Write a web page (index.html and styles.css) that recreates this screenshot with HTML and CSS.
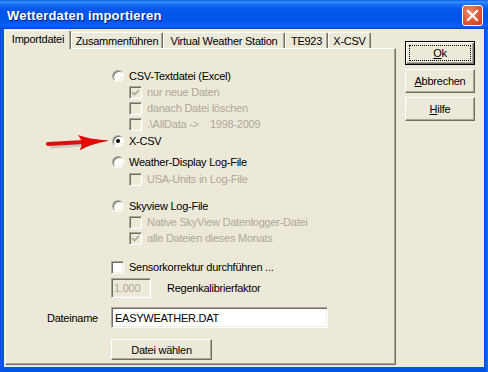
FILE: index.html
```html
<!DOCTYPE html>
<html>
<head>
<meta charset="utf-8">
<link rel="stylesheet" href="styles.css">
</head>
<body>
<div class="window">
  <div class="titlebar">
    <span class="title">Wetterdaten importieren</span>
    <span class="close"><svg width="13" height="13" viewBox="0 0 13 13"><path d="M2 2 L11 11 M11 2 L2 11" stroke="#fff" stroke-width="2.2" stroke-linecap="square"/></svg></span>
  </div>
  <div class="client">
    <div class="tabarea">
      <div class="tabs">
        <div class="tab active w1">Importdatei</div>
        <div class="tab w2">Zusammenführen</div>
        <div class="tab w3">Virtual Weather Station</div>
        <div class="tab w4">TE923</div>
        <div class="tab w5">X-CSV</div>
      </div>
      <div class="panel">
        <div class="row opt"><span class="radio"></span><span class="lbl">CSV-Textdatei (Excel)</span></div>
        <div class="row sub dis"><span class="check off on"><svg width="9" height="9" viewBox="0 0 9 9"><path d="M1 4 L3.5 6.5 L8 2" fill="none" stroke="#ACA899" stroke-width="1.7"/></svg></span><span class="lbl">nur neue Daten</span></div>
        <div class="row sub dis"><span class="check off"></span><span class="lbl">danach Datei löschen</span></div>
        <div class="row sub dis"><span class="check off"></span><span class="lbl">.\AllData -&gt;&nbsp;&nbsp;&nbsp; 1998-2009</span></div>
        <div class="row opt r-xcsv"><span class="radio sel"></span><span class="lbl">X-CSV</span></div>
        <div class="row opt r-wd"><span class="radio"></span><span class="lbl">Weather-Display Log-File</span></div>
        <div class="row sub dis r-usa"><span class="check off"></span><span class="lbl">USA-Units in Log-File</span></div>
        <div class="row opt r-sky"><span class="radio"></span><span class="lbl">Skyview Log-File</span></div>
        <div class="row sub dis"><span class="check off"></span><span class="lbl">Native SkyView Datenlogger-Datei</span></div>
        <div class="row sub dis"><span class="check off"><svg width="9" height="9" viewBox="0 0 9 9"><path d="M1 4 L3.5 6.5 L8 2" fill="none" stroke="#ACA899" stroke-width="1.7"/></svg></span><span class="lbl">alle Dateien dieses Monats</span></div>
        <div class="row sensor"><span class="check"></span><span class="lbl">Sensorkorrektur durchführen ...</span></div>
        <div class="rain"><span class="field disabled small">1.000</span><span class="rainlbl">Regenkalibrierfaktor</span></div>
        <div class="fname"><span class="flabel">Dateiname</span><span class="field wide">EASYWEATHER.DAT</span></div>
        <div class="choose"><span class="btn wbtn">Datei wählen</span></div>
      </div>
    </div>
    <div class="buttons">
      <span class="btn def"><span class="focus"><u>O</u>k</span></span>
      <span class="btn"><u>A</u>bbrechen</span>
      <span class="btn"><u>H</u>ilfe</span>
    </div>
  </div>
  <svg class="arrow" width="70" height="24" viewBox="0 0 70 24">
    <path d="M6 15.5 L40 13.5" stroke="#7a7a7a" stroke-opacity="0.3" stroke-width="4"/>
    <path d="M4 13 L40 11" stroke="#D81010" stroke-width="4" stroke-linecap="round"/>
    <path d="M34 4 Q44 8 64 9.5 Q46 13 36 19 Q40 11 34 4 Z" fill="#E80808"/>
    <path d="M36 18.5 Q46 13 64 9.5" fill="none" stroke="#A00000" stroke-width="1" stroke-opacity="0.6"/>
  </svg>
</div>
</body>
</html>
```
FILE: styles.css
```css
html, body {
  margin: 0;
  padding: 0;
  background: #fff;
}
body {
  font-family: "Liberation Sans", Arial, sans-serif;
  font-size: 11px;
  letter-spacing: -0.25px;
  color: #000;
}
.window {
  position: relative;
  width: 488px;
  height: 372px;
  display: flex;
  flex-direction: column;
  background: linear-gradient(to right, #0831D9 0, #166AEE 1px, #0055E5 2px, #0055E5 486px, #166AEE 487px);
}
.titlebar {
  height: 29px;
  flex: none;
  display: flex;
  align-items: center;
  justify-content: space-between;
  padding: 0 5px 0 7px;
  background: linear-gradient(to bottom, #0A5EEB 0, #3D91F9 2px, #1B72F5 4px, #0658EC 9px, #0054E6 16px, #0257EB 22px, #0763F4 26px, #0252E4 28px, #0040CF 29px);
  color: #fff;
}
.title {
  font-family: "Liberation Sans", Arial, sans-serif;
  font-weight: bold;
  font-size: 13px;
  letter-spacing: 0.2px;
  text-shadow: 1px 1px 0 #0A1883;
  margin-top: 1px;
}
.close {
  width: 21px;
  height: 21px;
  box-sizing: border-box;
  border: 1px solid #fff;
  border-radius: 3px;
  background: radial-gradient(circle at 35% 30%, #F08A6C 0, #E1603D 45%, #C8391A 100%);
  display: flex;
  align-items: center;
  justify-content: center;
  margin-top: 2px;
}
.client {
  flex: 1;
  margin: 0 4px 5px 4px;
  background: #ECE9D8;
  display: flex;
  align-items: flex-start;
}
.tabarea {
  margin: 1px 0 0 1px;
  width: 391px;
  display: flex;
  flex-direction: column;
}
.tabs {
  height: 18px;
  display: flex;
  align-items: flex-end;
  position: relative;
  z-index: 1;
}
.tab {
  height: 16px;
  box-sizing: border-box;
  border-top: 1px solid #fff;
  border-left: 1px solid #fff;
  border-right: 1px solid #716F64;
  border-radius: 2px 2px 0 0;
  box-shadow: inset -1px 0 0 #ACA899;
  display: flex;
  align-items: center;
  justify-content: center;
  padding-top: 1px;
  white-space: nowrap;
}
.tab.active {
  height: 19px;
  margin-bottom: -1px;
  background: #ECE9D8;
  padding-top: 0;
  padding-bottom: 2px;
}
.w1 { width: 66px; }
.w2 { width: 92px; }
.w3 { width: 122px; }
.w4 { width: 43px; }
.w5 { width: 43px; }
.panel {
  height: 317px;
  box-sizing: border-box;
  border-top: 1px solid #fff;
  border-left: 1px solid #fff;
  border-right: 1px solid #716F64;
  border-bottom: 1px solid #716F64;
  box-shadow: inset -1px -1px 0 #ACA899;
  padding-top: 19px;
  display: flex;
  flex-direction: column;
  align-items: flex-start;
}
.row {
  height: 16px;
  display: flex;
  align-items: center;
  white-space: nowrap;
}
.opt { margin-left: 106px; }
.sub { margin-left: 123px; }
.r-xcsv { margin-top: 1px; }
.r-wd { margin-top: 5px; }
.r-usa { margin-top: 1px; }
.r-sky { margin-top: 11px; }
.sensor { margin-left: 105px; margin-top: 13px; }
.dis { color: #ACA899; }
.lbl { margin-left: 5px; }
.radio {
  width: 12px;
  height: 12px;
  box-sizing: border-box;
  border-radius: 50%;
  border: 1px solid;
  border-color: #ACA899 #fff #fff #ACA899;
  box-shadow: inset 1px 1px 0 #716F64, inset -1px -1px 0 #F1EFE2;
  background: #fff;
  position: relative;
  flex: none;
}
.radio.sel::after {
  content: "";
  position: absolute;
  left: 3px;
  top: 3px;
  width: 4px;
  height: 4px;
  border-radius: 50%;
  background: #000;
}
.check {
  width: 13px;
  height: 13px;
  box-sizing: border-box;
  border: 1px solid;
  border-color: #ACA899 #fff #fff #ACA899;
  box-shadow: inset 1px 1px 0 #716F64, inset -1px -1px 0 #F1EFE2;
  background: #fff;
  flex: none;
  display: flex;
  align-items: center;
  justify-content: center;
}
.check.off { background: #ECE9D8; }
.field {
  box-sizing: border-box;
  border: 1px solid;
  border-color: #ACA899 #fff #fff #ACA899;
  box-shadow: inset 1px 1px 0 #716F64, inset -1px -1px 0 #F1EFE2;
  background: #fff;
  display: flex;
  align-items: center;
  padding-left: 3px;
  white-space: nowrap;
}
.field.disabled { background: #ECE9D8; color: #ACA899; }
.small { width: 40px; height: 20px; padding-left: 2px; }
.wide { width: 217px; height: 21px; }
.rain {
  margin: 3px 0 0 105px;
  display: flex;
  align-items: center;
}
.rainlbl { margin-left: 16px; }
.fname {
  margin: 9px 0 0 41px;
  display: flex;
  align-items: center;
}
.flabel { width: 64px; }
.choose { margin: 11px 0 0 105px; }
.btn {
  box-sizing: border-box;
  display: flex;
  align-items: center;
  justify-content: center;
  background: #ECE9D8;
  border: 1px solid;
  border-color: #fff #716F64 #716F64 #fff;
  box-shadow: inset -1px -1px 0 #ACA899;
  white-space: nowrap;
}
.wbtn { width: 101px; height: 21px; }
.buttons {
  margin: 12px 0 0 9px;
  display: flex;
  flex-direction: column;
  gap: 4px;
}
.buttons .btn { width: 70px; height: 24px; }
.buttons .btn.def {
  border: 1px solid #000;
  box-shadow: inset 1px 1px 0 #fff, inset -1px -1px 0 #716F64, inset -2px -2px 0 #ACA899;
  padding: 3px;
}
.focus {
  flex: 1;
  align-self: stretch;
  display: flex;
  align-items: center;
  justify-content: center;
  border: 1px dotted #000;
}
.arrow {
  position: absolute;
  left: 44px;
  top: 131px;
}
```
